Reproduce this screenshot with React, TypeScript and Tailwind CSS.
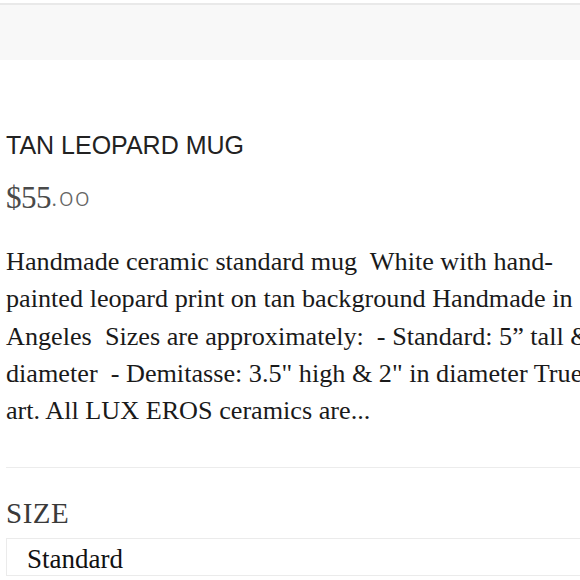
export default function App() {
  const lines = [
    "Handmade ceramic standard mug  White with hand-",
    "painted leopard print on tan background Handmade in",
    "Angeles  Sizes are approximately:  - Standard: 5\u201d tall & 3.5\u201d in",
    "diameter  - Demitasse: 3.5\" high & 2\" in diameter True to",
    "art. All LUX EROS ceramics are...",
  ];

  return (
    <div className="w-[580px] h-[580px] overflow-hidden bg-white">
      {/* top bar */}
      <div className="mt-[3px] h-[57px] border-t-2 border-[#e9e9e9] bg-[#f8f8f8]" />

      <div className="w-[640px] pl-[6px]">
        {/* title + price */}
        <h1
          className="mt-[70px] text-[25px] leading-[30px] text-[#222] whitespace-nowrap"
          style={{ fontFamily: '"Liberation Sans", Arial, sans-serif' }}
        >
          TAN LEOPARD MUG
        </h1>
        <div className="mt-[20px] flex items-start text-[#4a4a4a] oldstyle-nums">
          <span className="text-[31px] leading-[36px] tracking-[-0.5px]" style={{ fontFamily: '"Liberation Serif", serif' }}>
            $55
          </span>
          <span
            className="mt-[3px] text-[26px] leading-[26px] font-light text-[#666] tracking-[2px]"
            style={{ fontFamily: '"Noto Sans", "Open Sans", sans-serif' }}
          >
            .00
          </span>
        </div>

        {/* description */}
        <div
          className="mt-[27px] text-[26.2px] leading-[37.3px] text-[#1a1a1a]"
          style={{ fontFamily: '"Liberation Serif", "Times New Roman", serif' }}
        >
          {lines.map((l) => (
            <div key={l} className="whitespace-pre">
              {l}
            </div>
          ))}
        </div>

        <div className="mt-[38px] border-t border-[#ececec]" />

        {/* size */}
        <div
          className="mt-[30px] text-[29px] leading-[30px] tracking-[0.5px] text-[#3a3a3a]"
          style={{ fontFamily: '"Liberation Serif", serif' }}
        >
          SIZE
        </div>
        <div className="mt-[10px] h-[38px] border border-[#ebebeb]">
          <div className="h-[29px] overflow-hidden">
            <div
              className="pl-[20px] pt-[5px] text-[27px] leading-[30px] text-[#111]"
              style={{ fontFamily: '"Liberation Serif", serif' }}
            >
              Standard
            </div>
          </div>
        </div>
      </div>
    </div>
  );
}
